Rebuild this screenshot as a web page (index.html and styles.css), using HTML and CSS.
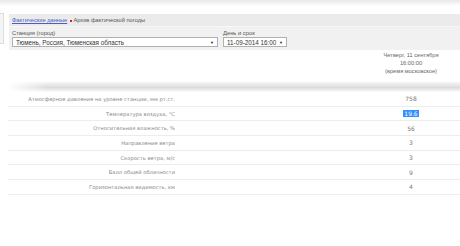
FILE: index.html
```html
<!DOCTYPE html>
<html lang="ru">
<head>
    <meta charset="UTF-8">
    <title>Архив фактической погоды</title>
    <link rel="stylesheet" href="styles.css">
</head>
<body>
    <div class="top-shade"></div>
    <div class="page">
        <div class="side-stub"></div>
        <div class="panel">
            <div class="crumbs">
                <a href="#">Фактические данные</a>
                <span class="dot"></span>
                <span>Архив фактической погоды</span>
            </div>
            <div class="filters">
                <div class="field">
                    <label>Станция (город)</label>
                    <div class="pick pick-wide">
                        <span>Тюмень, Россия, Тюменская область</span>
                        <span class="arrow">&#9660;</span>
                    </div>
                </div>
                <div class="field">
                    <label>День и срок</label>
                    <div class="pick pick-date">
                        <span>11-09-2014 16:00</span>
                        <span class="arrow">&#9660;</span>
                    </div>
                </div>
            </div>
        </div>
    </div>

    <div class="obs">
        <div class="obs-head">
            <div class="head-cell">Четверг, 11 сентября<br>16:00:00<br>(время московское)</div>
        </div>
        <div class="band"></div>
        <div class="row"><div class="name">Атмосферное давление на уровне станции, мм рт.ст.</div><div class="val">758</div></div>
        <div class="row"><div class="name">Температура воздуха, °C</div><div class="val"><span class="sel">19.6</span></div></div>
        <div class="row"><div class="name">Относительная влажность, %</div><div class="val">56</div></div>
        <div class="row"><div class="name">Направление ветра</div><div class="val">3</div></div>
        <div class="row"><div class="name">Скорость ветра, м/с</div><div class="val">3</div></div>
        <div class="row"><div class="name">Балл общей облачности</div><div class="val">9</div></div>
        <div class="row"><div class="name">Горизонтальная видимость, км</div><div class="val">4</div></div>
    </div>
</body>
</html>
```
FILE: styles.css
```css
body {
    margin: 0;
    padding: 0;
    background: #fff;
    font-family: "Liberation Sans", Arial, sans-serif;
    color: #333;
}
.top-shade {
    height: 6px;
    background: linear-gradient(#e6e8ea, #fff);
}
.page {
    display: flex;
    margin-top: 7px;
    height: 37px;
}
.side-stub {
    width: 3px;
    height: 29px;
    background: #f4f4f4;
    border: 1px solid #dedede;
    border-left: none;
}
.panel {
    flex: 1;
    margin-left: 5px;
    margin-top: 1px;
}
.crumbs {
    height: 12px;
    background: #ebebeb;
    border-bottom: 1px solid #f7f7f7;
    padding-left: 3px;
    font-size: 5.7px;
    line-height: 12px;
    color: #555;
}
.crumbs a {
    color: #4a5fc0;
}
.dot {
    display: inline-block;
    width: 2px;
    height: 2px;
    background: #e02020;
    margin: 0 0 0 1px;
    vertical-align: middle;
}
.filters {
    display: flex;
    gap: 5px;
    height: 23px;
    background: #f1f1f1;
    padding-left: 3px;
}
.field {
    display: flex;
    flex-direction: column;
}
.field label {
    font-size: 5.8px;
    line-height: 8px;
    margin-top: 2px;
    color: #555;
}
.pick {
    display: flex;
    justify-content: space-between;
    align-items: center;
    height: 8px;
    background: #fff;
    border: 1px solid #b0b0b0;
    font-size: 6.3px;
    white-space: nowrap;
    padding: 0 3px 0 3px;
    color: #333;
}
.pick-wide {
    width: 198px;
}
.pick-date {
    width: 56px;
}
.arrow {
    font-size: 4px;
    color: #222;
}
.obs {
    font-family: "DejaVu Sans", Verdana, sans-serif;
    color: #888;
    font-size: 5.2px;
    padding-left: 8px;
}
.obs-head {
    display: flex;
    justify-content: flex-end;
    height: 32px;
}
.head-cell {
    width: 98px;
    text-align: center;
    font-family: "Liberation Sans", Arial, sans-serif;
    font-size: 5.7px;
    line-height: 8px;
    color: #666;
    padding-top: 1px;
}
.band {
    position: relative;
    height: 10px;
    background: linear-gradient(#f6f6f6, #dcdcdc 55%, #f0f0f0 85%, #fff);
}
.band::before {
    content: "";
    position: absolute;
    left: 0;
    top: 0;
    bottom: 0;
    width: 40px;
    background: linear-gradient(90deg, #fff, rgba(255, 255, 255, 0));
}
.row {
    display: flex;
    height: 13.7px;
    border-bottom: 1px solid #ececec;
    align-items: center;
}
.name {
    width: 167px;
    text-align: right;
}
.val {
    margin-left: auto;
    width: 98px;
    text-align: center;
    font-size: 6px;
    color: #777;
}
.sel {
    background: #3390ff;
    color: #fff;
    padding: 0 1px;
}
```
